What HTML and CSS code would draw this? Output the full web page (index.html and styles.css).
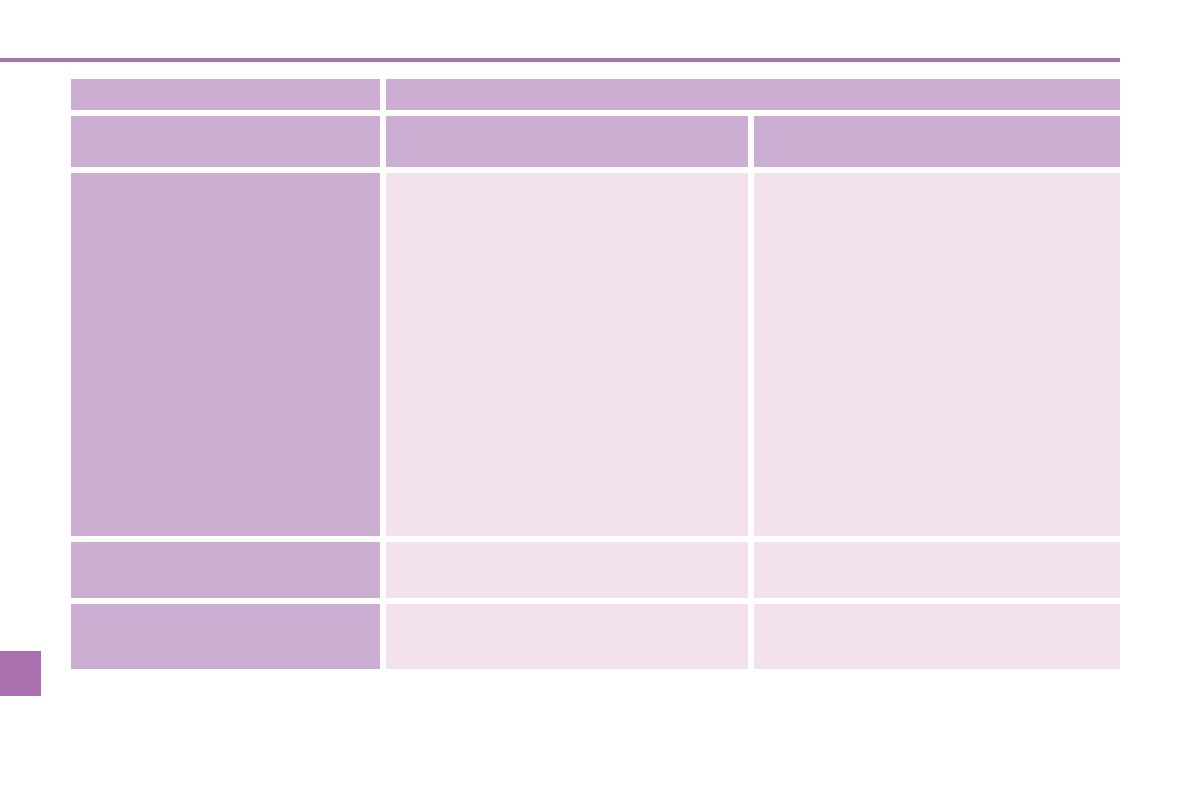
FILE: index.html
```html
<!DOCTYPE html>
<html lang="en">
<head>
    <meta charset="UTF-8">
    <meta name="viewport" content="width=device-width, initial-scale=1.0">
    <title>Table</title>
    <link rel="stylesheet" href="styles.css">
</head>
<body>
    <div class="page">
        <div class="top-rule"></div>
        <div class="grid">
            <div class="cell head"></div>
            <div class="cell head span2"></div>

            <div class="cell head row-2"></div>
            <div class="cell head row-2"></div>
            <div class="cell head row-2"></div>

            <div class="cell head row-3"></div>
            <div class="cell light row-3"></div>
            <div class="cell light row-3"></div>

            <div class="cell head row-4"></div>
            <div class="cell light row-4"></div>
            <div class="cell light row-4"></div>

            <div class="cell head row-5"></div>
            <div class="cell light row-5"></div>
            <div class="cell light row-5"></div>
        </div>
        <div class="side-tab"></div>
    </div>
</body>
</html>
```

FILE: styles.css
```css
body {
    margin: 0;
    padding: 0;
    background-color: #ffffff;
    font-family: "Liberation Sans", Arial, sans-serif;
}
.page {
    position: relative;
    width: 1191px;
    height: 794px;
    padding-top: 58px;
    box-sizing: border-box;
}
.top-rule {
    width: 1120px;
    height: 4px;
    background-color: #a970b0;
}
.grid {
    display: grid;
    grid-template-columns: 309px 362px 366px;
    grid-template-rows: 31px 51px 363px 56px 65px;
    gap: 6px;
    margin: 17px 0 0 71px;
    width: 1049px;
}
.cell {
    min-height: 0;
}
.head {
    background-color: #ccaed3;
}
.light {
    background-color: #f3e2ee;
}
.span2 {
    grid-column: span 2;
}
.side-tab {
    position: absolute;
    left: 0;
    top: 651px;
    width: 41px;
    height: 45px;
    background-color: #a970b0;
}
```
